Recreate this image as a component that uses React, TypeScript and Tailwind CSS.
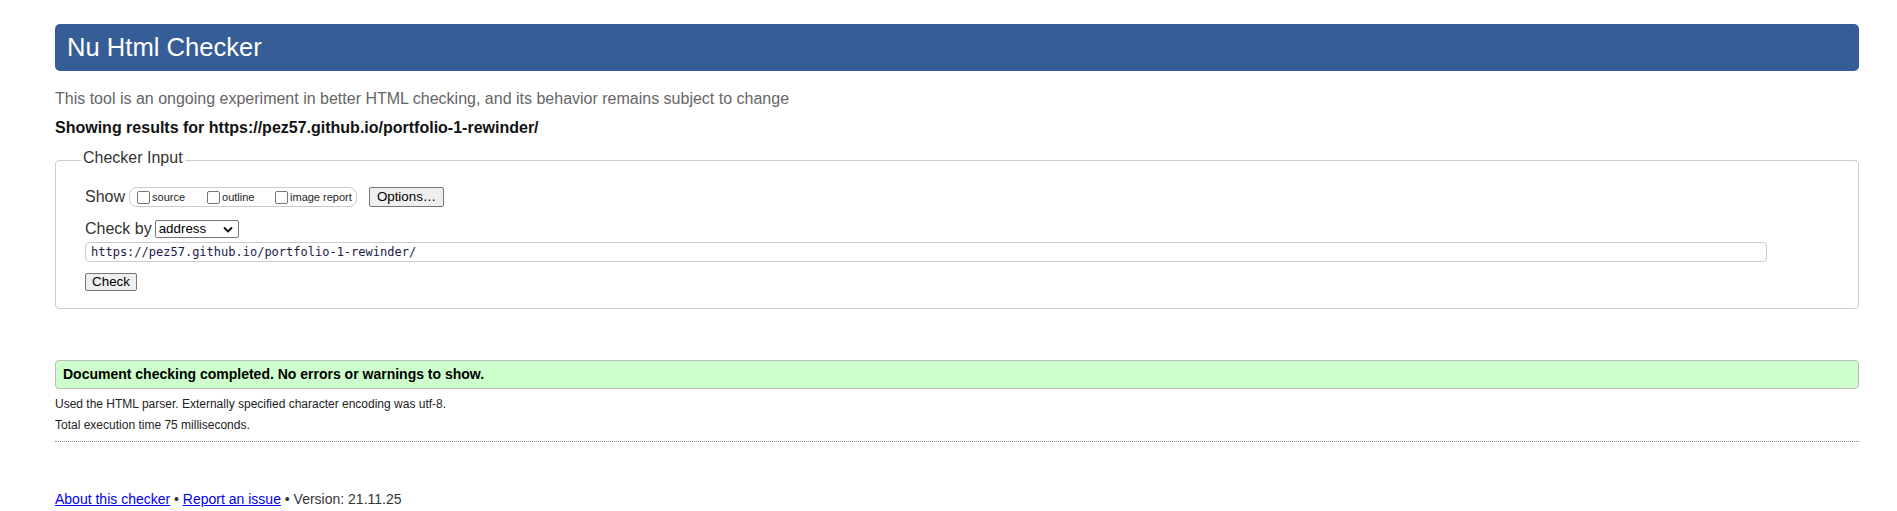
import React from "react";

function Checkbox() {
  return <span className="inline-block w-[13px] h-[13px] border border-[#767676] rounded-[2px] bg-white shrink-0" />;
}

export default function App() {
  return (
    <div className="min-h-[511px] bg-white pl-[55px] pr-[38px] pt-[24px] text-[#222] font-['Liberation_Sans',Arial,sans-serif]">
      <div className="h-[47px] rounded-[5px] bg-[#365d95] text-white text-[25.6px] pl-[12px] flex items-center">
        Nu Html Checker
      </div>
      <div className="mt-[18px] leading-[20px] text-[16px] text-[#666]">
        This tool is an ongoing experiment in better HTML checking, and its behavior remains subject to change
      </div>
      <div className="mt-[9px] leading-[20px] text-[16px] font-bold text-[#111]">
        Showing results for https://pez57.github.io/portfolio-1-rewinder/
      </div>
      <fieldset className="mt-[10px] border border-[#ccc] rounded-[4px] px-[25px] pt-[15px] pb-[17px]">
        <legend className="px-[2px] pb-[4px] leading-[20px] text-[16px] text-[#333]">Checker Input</legend>
        <div className="pl-[4px]">
          <div className="h-[20px] flex items-center text-[16px] text-[#333]">
            <span className="mr-[4px]">Show</span>
            <div className="h-[20px] w-[228px] border border-[#ccc] rounded-[8px] flex items-center pl-[7px] text-[11px] text-[#222]">
              <Checkbox />
              <span className="ml-[2px] w-[55px]">source</span>
              <Checkbox />
              <span className="ml-[2px] w-[53px]">outline</span>
              <Checkbox />
              <span className="ml-[2px]">image report</span>
            </div>
            <button className="ml-[12px] h-[20px] w-[75px] border border-[#767676] rounded-[2px] bg-[#efefef] text-[13.33px] text-black flex items-center justify-center">
              Options…
            </button>
          </div>
          <div className="mt-[13px] h-[18px] flex items-center text-[16px] text-[#333]">
            <span className="mr-[3px]">Check by</span>
            <div className="h-[18px] w-[84px] border border-[#767676] rounded-[2px] bg-white flex items-center justify-between pl-[3px] pr-[5px] text-[13.33px] text-black">
              <span>address</span>
              <svg width="10" height="7" viewBox="0 0 10 7">
                <path d="M1 1.5 L5 5.5 L9 1.5" fill="none" stroke="#111" strokeWidth="1.8" />
              </svg>
            </div>
          </div>
          <div className="mt-[4px] h-[20px] w-[1682px] border border-[#ccc] rounded-[4px] flex items-center pl-[5px] text-[12px] text-[#1a1a4a] font-['DejaVu_Sans_Mono',monospace]">
            https://pez57.github.io/portfolio-1-rewinder/
          </div>
          <button className="mt-[11px] h-[18px] w-[52px] border border-[#767676] rounded-[2px] bg-[#efefef] text-[13.33px] text-black flex items-center justify-center">
            Check
          </button>
        </div>
      </fieldset>
      <div className="mt-[51px] h-[29px] border border-[#bbb] rounded-[4px] bg-[#ccffcc] flex items-center pl-[7px] text-[14px] font-bold text-black">
        Document checking completed. No errors or warnings to show.
      </div>
      <div className="mt-[7px] leading-[16px] text-[12px] text-[#222]">
        Used the HTML parser. Externally specified character encoding was utf-8.
      </div>
      <div className="mt-[5px] leading-[16px] text-[12px] text-[#222]">Total execution time 75 milliseconds.</div>
      <div className="mt-[8px] border-t border-dotted border-[#888]" />
      <div className="mt-[48px] leading-[18px] text-[14px] text-[#333]">
        <a href="#" className="text-[#0000ee] underline">About this checker</a>
        {" • "}
        <a href="#" className="text-[#0000ee] underline">Report an issue</a>
        {" • Version: 21.11.25"}
      </div>
    </div>
  );
}
